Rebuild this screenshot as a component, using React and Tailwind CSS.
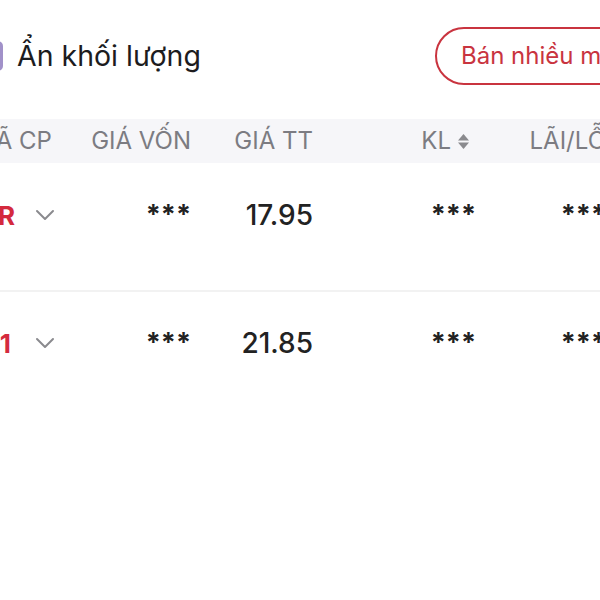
import React from "react";

const rows = [
  { ticker: "VPR", price: "17.95", pad: "pr-0" },
  { ticker: "HD1", price: "21.85", pad: "pr-[4px]" },
];

const Chevron = () => (
  <svg width="20" height="12" viewBox="0 0 20 12" fill="none" className="shrink-0">
    <path d="M2 2l8 8 8-8" stroke="#8a8a8e" strokeWidth="2" strokeLinecap="round" strokeLinejoin="round" />
  </svg>
);

const SortIcon = () => (
  <svg width="13" height="17" viewBox="0 0 13 17" className="shrink-0">
    <path d="M6.5 1l5.5 6.5H1z" fill="#8a8a8e" />
    <path d="M6.5 16l5.5-6.5H1z" fill="#8a8a8e" />
  </svg>
);

const App = () => {
  return (
    <div
      className="w-[600px] h-[600px] overflow-hidden bg-white"
      style={{ fontFamily: "Inter, 'Noto Sans', sans-serif" }}
    >
      {/* top bar */}
      <div className="flex items-center pt-[27px] -ml-[25px] w-[900px]">
        <div className="w-[460px] flex items-center shrink-0">
          <div className="w-[28px] h-[30px] rounded-[5px] border-[3px] border-[#a191c9] shrink-0" />
          <span className="ml-[14px] text-[28.5px] text-[#1c1c1e] leading-[58px] whitespace-nowrap">Ẩn khối lượng</span>
        </div>
        <button className="h-[58px] shrink-0 border-2 border-[#c9343f] rounded-full px-[24px] text-[24px] text-[#c9343f] whitespace-nowrap">
          Bán nhiều mã
        </button>
      </div>

      <div className="mt-[34px] -ml-[60px] w-[700px]">
        {/* header */}
        <div className="flex items-center h-[44px] bg-[#f6f6f9] text-[24px] text-[#7c7c82] whitespace-nowrap">
          <div className="w-[130px] pl-[34px]">MÃ CP</div>
          <div className="w-[121px] text-right">GIÁ VỐN</div>
          <div className="w-[122px] text-right">GIÁ TT</div>
          <div className="w-[163px] flex items-center justify-end gap-[6px] pr-[6px]">
            KL <SortIcon />
          </div>
          <div className="w-[130px] text-right">LÃI/LỖ</div>
        </div>

        {/* rows */}
        {rows.map((row, i) => (
          <div
            key={row.ticker}
            className={
              i === 0
                ? "flex items-start h-[129px] pt-[37px] border-b-2 border-[#f2f2f2]"
                : "flex items-start h-[129px] pt-[36px]"
            }
          >
            <div className="w-[130px] flex items-center h-[30px]">
              <div className={`w-[75px] text-right text-[26px] font-bold text-[#d42a3e] whitespace-nowrap ${row.pad}`}>
                {row.ticker}
              </div>
              <div className="ml-[20px]">
                <Chevron />
              </div>
            </div>
            <div className="w-[121px] text-right text-[27px] font-bold text-[#222] h-[30px] leading-[30px]">***</div>
            <div className="w-[122px] text-right text-[28px] font-medium text-[#222] h-[30px] leading-[30px]">
              {row.price}
            </div>
            <div className="w-[163px] text-right text-[27px] font-bold text-[#222] h-[30px] leading-[30px]">***</div>
            <div className="w-[130px] text-right text-[27px] font-bold text-[#222] h-[30px] leading-[30px]">***</div>
          </div>
        ))}
      </div>
    </div>
  );
};

export default App;
